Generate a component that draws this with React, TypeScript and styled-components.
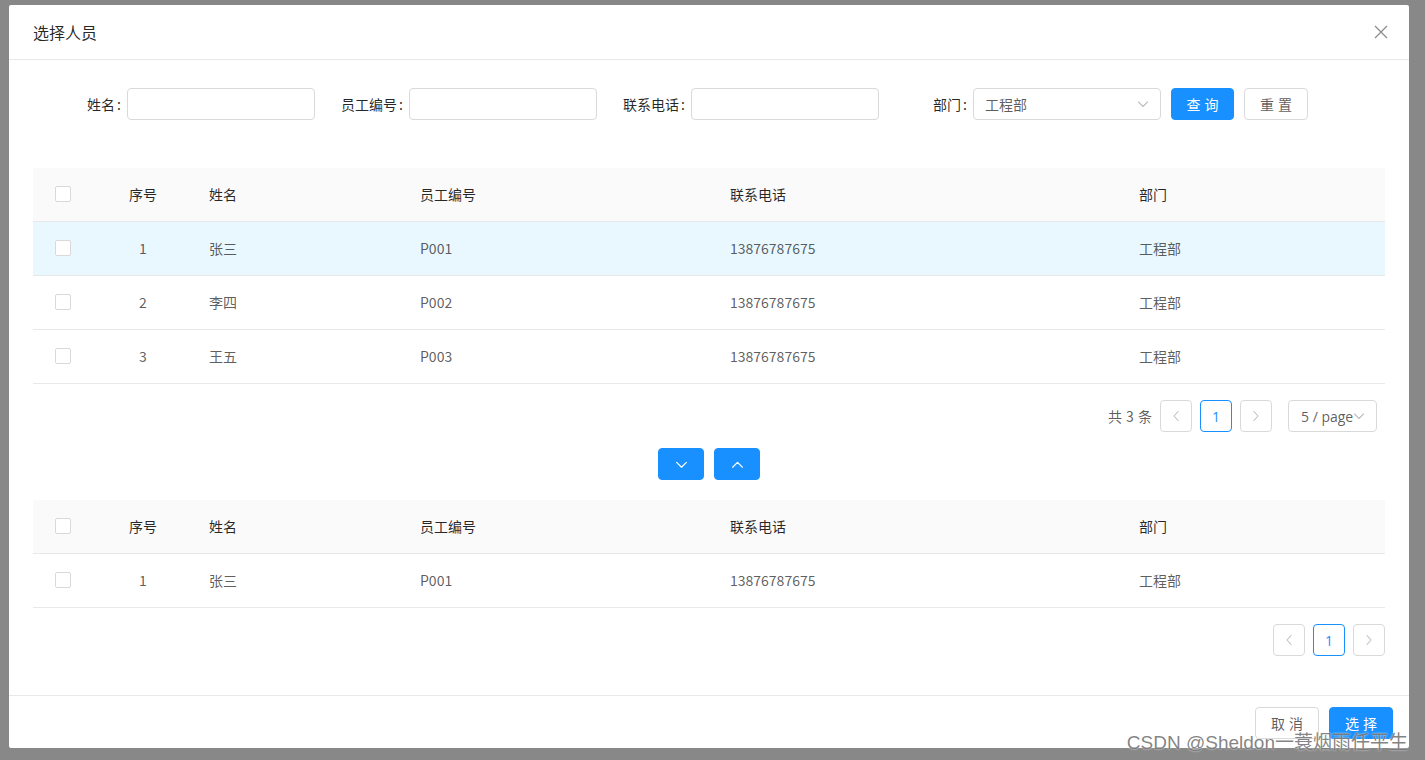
import React from 'react';
import styled, { createGlobalStyle } from 'styled-components';

const GlobalStyle = createGlobalStyle`
  html, body {
    margin: 0;
    padding: 0;
    background: #888888;
    font-family: "Noto Sans CJK SC", "Noto Sans", sans-serif;
    font-size: 14px;
    color: rgba(0, 0, 0, 0.85);
  }
  * { box-sizing: border-box; }
`;

const Backdrop = styled.div`
  position: relative;
  width: 1425px;
  height: 760px;
  padding: 5px 16px 0 9px;
  overflow: hidden;
`;

const Modal = styled.div`
  width: 1400px;
  height: 743px;
  background: #fff;
  border-radius: 2px;
  display: flex;
  flex-direction: column;
`;

const Header = styled.div`
  height: 55px;
  padding: 0 24px;
  border-bottom: 1px solid #e8e8e8;
  display: flex;
  align-items: center;
  justify-content: space-between;
`;

const Title = styled.div`
  font-size: 16px;
  line-height: 22px;
  color: rgba(0, 0, 0, 0.85);
`;

const CloseBtn = styled.span`
  display: flex;
  width: 14px;
  height: 14px;
  margin-right: -3px;
`;

const Body = styled.div`
  flex: 1;
  padding: 28px 24px 0;
  display: flex;
  flex-direction: column;
`;

const SearchRow = styled.div`
  display: flex;
  align-items: center;
  height: 32px;
  margin-bottom: 48px;
`;

const FormItem = styled.div`
  width: 282px;
  display: flex;
  align-items: center;
`;

const Label = styled.label`
  width: 94px;
  padding-right: 6px;
  text-align: right;
  color: rgba(0, 0, 0, 0.85);
  white-space: nowrap;

  &::after {
    content: ':';
    margin-left: 2px;
  }
`;

const Input = styled.div`
  width: 188px;
  height: 32px;
  border: 1px solid #d9d9d9;
  border-radius: 4px;
  background: #fff;
`;

const Select = styled.div<{ $w?: number }>`
  width: ${p => p.$w ?? 188}px;
  height: 32px;
  border: 1px solid #d9d9d9;
  border-radius: 4px;
  background: #fff;
  display: flex;
  align-items: center;
  justify-content: space-between;
  padding: 0 11px;
  color: rgba(0, 0, 0, 0.65);
`;

const Button = styled.button<{ $primary?: boolean; $w?: number }>`
  width: ${p => p.$w ?? 64}px;
  height: 32px;
  border-radius: 4px;
  border: 1px solid ${p => (p.$primary ? '#1890ff' : '#d9d9d9')};
  background: ${p => (p.$primary ? '#1890ff' : '#fff')};
  color: ${p => (p.$primary ? '#fff' : 'rgba(0, 0, 0, 0.65)')};
  font-family: inherit;
  font-size: 14px;
  letter-spacing: 4px;
  text-indent: 4px;
  padding: 0;
  margin-left: 10px;
  display: flex;
  align-items: center;
  justify-content: center;
`;

const Table = styled.div`
  width: 100%;
  display: grid;
  grid-template-columns: 60px 100px 211px 310px 409px 1fr;
`;

const HeadCell = styled.div<{ $center?: boolean }>`
  height: 54px;
  background: #fafafa;
  border-bottom: 1px solid #e8e8e8;
  display: flex;
  align-items: center;
  justify-content: ${p => (p.$center ? 'center' : 'flex-start')};
  color: rgba(0, 0, 0, 0.85);
  padding: 0 ${p => (p.$center ? '0' : '16px')} 1px;
`;

const Cell = styled(HeadCell)<{ $active?: boolean }>`
  background: ${p => (p.$active ? '#e9f7fe' : '#fff')};
  color: rgba(0, 0, 0, 0.65);
`;

const Checkbox = styled.span`
  width: 16px;
  height: 16px;
  border: 1px solid #d9d9d9;
  border-radius: 2px;
  background: #fff;
`;

const Pager = styled.div<{ $mr?: number }>`
  display: flex;
  align-items: center;
  justify-content: flex-end;
  margin-top: 16px;
  padding-right: ${p => p.$mr ?? 0}px;
  height: 32px;
`;

const Total = styled.span`
  color: rgba(0, 0, 0, 0.65);
  word-spacing: 1px;
`;

const PageBtn = styled.span<{ $active?: boolean }>`
  width: 32px;
  height: 32px;
  border: 1px solid ${p => (p.$active ? '#1890ff' : '#d9d9d9')};
  border-radius: 4px;
  color: ${p => (p.$active ? '#1890ff' : 'rgba(0, 0, 0, 0.25)')};
  display: flex;
  align-items: center;
  justify-content: center;
  margin-left: 8px;
  font-family: "Open Sans", sans-serif;
  font-size: 14px;
`;

const SizeSelect = styled(Select)`
  margin-left: 16px;
  padding: 0 6px 0 12px;
  font-family: "Open Sans", sans-serif;
  font-size: 14px;
  justify-content: flex-start;
`;

const TransferRow = styled.div`
  display: flex;
  justify-content: center;
  gap: 10px;
  margin: 16px 0 20px;
`;

const TransferBtn = styled(Button)`
  width: 46px;
  margin: 0;
  letter-spacing: 0;
  text-indent: 0;
`;

const Footer = styled.div`
  height: 53px;
  border-top: 1px solid #e8e8e8;
  padding: 11px 16px 0;
  display: flex;
  justify-content: flex-end;
  align-items: flex-start;
`;

const Watermark = styled.div`
  position: absolute;
  right: 17px;
  bottom: 6px;
  font-family: "Liberation Sans", "Noto Sans CJK SC", sans-serif;
  font-size: 19px;
  line-height: 22px;
  color: rgba(110, 110, 110, 0.85);
  text-shadow: 0 0 2px rgba(255, 255, 255, 0.9);
  pointer-events: none;
  white-space: nowrap;
`;

const Chevron = ({ dir, color, size = 12 }: { dir: 'up' | 'down' | 'left' | 'right'; color: string; size?: number }) => {
  const d = {
    down: 'M1.5 4 L6 8.5 L10.5 4',
    up: 'M1.5 8.5 L6 4 L10.5 8.5',
    left: 'M8 1.5 L4 6 L8 10.5',
    right: 'M4 1.5 L8 6 L4 10.5',
  }[dir];
  return (
    <svg width={size} height={size} viewBox="0 0 12 12" fill="none">
      <path d={d} stroke={color} strokeWidth="1.1" strokeLinecap="round" strokeLinejoin="round" />
    </svg>
  );
};

type Row = { no: number; name: string; code: string; phone: string; dept: string };

const rows: Row[] = [
  { no: 1, name: '张三', code: 'P001', phone: '13876787675', dept: '工程部' },
  { no: 2, name: '李四', code: 'P002', phone: '13876787675', dept: '工程部' },
  { no: 3, name: '王五', code: 'P003', phone: '13876787675', dept: '工程部' },
];

const DataTable = ({ data, activeRow }: { data: Row[]; activeRow?: number }) => (
  <Table>
    <HeadCell $center><Checkbox /></HeadCell>
    <HeadCell $center>序号</HeadCell>
    <HeadCell>姓名</HeadCell>
    <HeadCell>员工编号</HeadCell>
    <HeadCell>联系电话</HeadCell>
    <HeadCell>部门</HeadCell>
    {data.map((r, i) => {
      const a = i === activeRow;
      return (
        <React.Fragment key={r.code}>
          <Cell $center $active={a}><Checkbox /></Cell>
          <Cell $center $active={a}>{r.no}</Cell>
          <Cell $active={a}>{r.name}</Cell>
          <Cell $active={a}>{r.code}</Cell>
          <Cell $active={a}>{r.phone}</Cell>
          <Cell $active={a}>{r.dept}</Cell>
        </React.Fragment>
      );
    })}
  </Table>
);

export default function App() {
  return (
    <>
      <GlobalStyle />
      <Backdrop>
        <Modal>
          <Header>
            <Title>选择人员</Title>
            <CloseBtn>
              <svg width="14" height="14" viewBox="0 0 14 14">
                <path d="M1 1 L13 13 M13 1 L1 13" stroke="rgba(0,0,0,0.45)" strokeWidth="1.3" />
              </svg>
            </CloseBtn>
          </Header>
          <Body>
            <SearchRow>
              <FormItem><Label>姓名</Label><Input /></FormItem>
              <FormItem><Label>员工编号</Label><Input /></FormItem>
              <FormItem><Label>联系电话</Label><Input /></FormItem>
              <FormItem>
                <Label>部门</Label>
                <Select>
                  <span>工程部</span>
                  <Chevron dir="down" color="rgba(0,0,0,0.25)" />
                </Select>
              </FormItem>
              <Button $primary $w={63}>查询</Button>
              <Button>重置</Button>
            </SearchRow>

            <DataTable data={rows} activeRow={0} />
            <Pager $mr={8}>
              <Total>共 3 条</Total>
              <PageBtn><Chevron dir="left" color="rgba(0,0,0,0.25)" /></PageBtn>
              <PageBtn $active>1</PageBtn>
              <PageBtn><Chevron dir="right" color="rgba(0,0,0,0.25)" /></PageBtn>
              <SizeSelect $w={89}>
                <span>5 / page</span>
                <Chevron dir="down" color="rgba(0,0,0,0.25)" />
              </SizeSelect>
            </Pager>

            <TransferRow>
              <TransferBtn $primary><Chevron dir="down" color="#fff" size={13} /></TransferBtn>
              <TransferBtn $primary><Chevron dir="up" color="#fff" size={13} /></TransferBtn>
            </TransferRow>

            <DataTable data={rows.slice(0, 1)} />
            <Pager>
              <PageBtn><Chevron dir="left" color="rgba(0,0,0,0.25)" /></PageBtn>
              <PageBtn $active>1</PageBtn>
              <PageBtn><Chevron dir="right" color="rgba(0,0,0,0.25)" /></PageBtn>
            </Pager>
          </Body>
          <Footer>
            <Button>取消</Button>
            <Button $primary>选择</Button>
          </Footer>
        </Modal>
        <Watermark>CSDN @Sheldon一蓑烟雨任平生</Watermark>
      </Backdrop>
    </>
  );
}
